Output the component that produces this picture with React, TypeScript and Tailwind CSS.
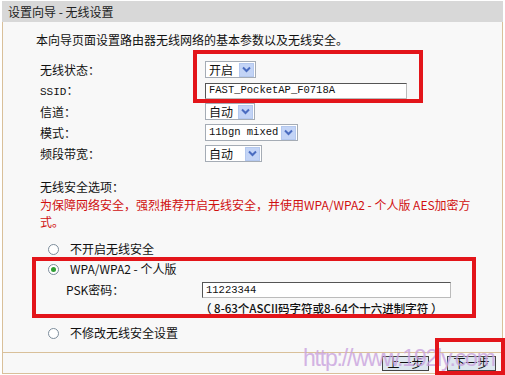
import React from "react";

const CJK = '"Noto Sans CJK SC", "Noto Sans", sans-serif';
const MONO = '"Liberation Mono", "Noto Sans CJK SC", monospace';

function Arrow() {
  return (
    <div className="w-[15px] h-[14px] bg-[#c3d4f6] border border-[#b4c8ee] flex items-center justify-center">
      <svg width="9" height="7" viewBox="0 0 9 7">
        <polyline points="1,1.5 4.5,5 8,1.5" fill="none" stroke="#4a6cc0" strokeWidth="2" />
      </svg>
    </div>
  );
}

function Select({ text, w, mono }: { text: string; w: number; mono?: boolean }) {
  return (
    <div
      className="h-[17px] bg-white border border-[#a5acb5] flex items-center justify-between pl-[3px] pr-[1px]"
      style={{ width: w }}
    >
      <span
        className={mono ? "text-[10.5px] leading-none" : "text-[12px] leading-none"}
        style={{ fontFamily: mono ? MONO : CJK }}
      >
        {text}
      </span>
      <Arrow />
    </div>
  );
}

function Radio({ on }: { on?: boolean }) {
  return (
    <div className="w-[11px] h-[11px] rounded-full border border-[#7d8d9c] bg-white flex items-center justify-center">
      {on && <div className="w-[5px] h-[5px] rounded-full bg-[#2f9e33]" />}
    </div>
  );
}

function Row({ label, children }: { label: React.ReactNode; children: React.ReactNode }) {
  return (
    <div className="h-[21px] flex items-center">
      <div className="w-[165px] text-[12px]">{label}</div>
      {children}
    </div>
  );
}

export default function App() {
  return (
    <div
      className="relative w-[505px] h-[375px] bg-white overflow-hidden text-[#111]"
      style={{ fontFamily: CJK }}
    >
      <div className="ml-[2px] w-[501px] pt-[1px]">
        <div className="h-[21px] bg-[#d8d8d8] pl-[6px] flex items-center text-[12px] text-[#222]">
          设置向导 - 无线设置
        </div>
        <div className="border-l border-r border-b border-[#d9c09a] bg-[#f8f8f8] flex flex-col">
          <div className="pl-[37px] pt-[10px] pb-[9px] flex flex-col">
            <div className="h-[16px] leading-[16px] text-[12px] -ml-[4px]">
              本向导页面设置路由器无线网络的基本参数以及无线安全。
            </div>
            <div className="mt-[11px] flex flex-col">
              <Row label="无线状态：">
                <Select text="开启" w={51} />
              </Row>
              <Row
                label={
                  <span>
                    <span className="text-[11px]" style={{ fontFamily: MONO }}>SSID</span>：
                  </span>
                }
              >
                <div className="w-[202px] h-[16px] bg-white border border-[#555] border-r-[#bbb] border-b-[#bbb] flex items-center pl-[3px]">
                  <span className="text-[10.5px] leading-none" style={{ fontFamily: MONO }}>
                    FAST_PocketAP_F0718A
                  </span>
                </div>
              </Row>
              <Row label="信道：">
                <Select text="自动" w={50} />
              </Row>
              <Row label="模式：">
                <Select text="11bgn mixed" w={93} mono />
              </Row>
              <Row label="频段带宽：">
                <Select text="自动" w={57} />
              </Row>
            </div>
            <div className="mt-[14px] h-[18px] leading-[18px] text-[12px]">无线安全选项：</div>
            <div className="text-[12px] leading-[17px] text-[#d01010] whitespace-nowrap">
              为保障网络安全，强烈推荐开启无线安全，并使用WPA/WPA2 - 个人版 AES加密方
              <br />
              式。
            </div>
            <div className="mt-[9px] h-[20px] flex items-center pl-[8px] gap-[11px] text-[12px]">
              <Radio />
              <span>不开启无线安全</span>
            </div>
            <div className="h-[20px] flex items-center pl-[8px] gap-[11px] text-[12px]">
              <Radio on />
              <span>WPA/WPA2 - 个人版</span>
            </div>
            <div className="h-[20px] mt-[1px] flex items-center pl-[26px] text-[12px]">
              <div className="w-[136px]">PSK密码：</div>
              <div className="w-[249px] h-[16px] bg-white border border-[#555] border-r-[#bbb] border-b-[#bbb] flex items-center pl-[3px]">
                <span className="text-[10.5px] leading-none" style={{ fontFamily: MONO }}>11223344</span>
              </div>
            </div>
            <div className="h-[16px] leading-[16px] pl-[160px] text-[11.5px] font-medium whitespace-nowrap">
              （ 8-63个ASCII码字符或8-64个十六进制字符 ）
            </div>
            <div className="mt-[7px] h-[20px] flex items-center pl-[8px] gap-[11px] text-[12px]">
              <Radio />
              <span>不修改无线安全设置</span>
            </div>
          </div>
          <div className="border-t border-[#d9c09a] h-[21px] flex items-center justify-end gap-[18px] pr-[6px]">
            <div className="w-[47px] h-[15px] bg-[#dde6ef] border border-[#444] flex items-center justify-center text-[12px] leading-none">
              上一步
            </div>
            <div className="w-[49px] h-[15px] bg-[#dde6ef] border border-[#444] flex items-center justify-center text-[12px] leading-none">
              下一步
            </div>
          </div>
        </div>
      </div>

      <div
        className="absolute left-[303px] top-[344px] text-[23px] leading-[28px] tracking-[-1.2px] text-[#c9a2de] opacity-80 whitespace-nowrap"
        style={{ fontFamily: '"Liberation Sans", Arial, sans-serif' }}
      >
        http://www.192ly.com
      </div>

      <div className="absolute left-[193px] top-[50px] w-[230px] h-[53px] border-[4px] border-[#e3151a]" />
      <div className="absolute left-[32px] top-[257px] w-[444px] h-[61px] border-[4px] border-[#e3151a]" />
      <div className="absolute left-[435px] top-[338px] w-[70px] h-[37px] border-[4px] border-[#e3151a]" />
    </div>
  );
}
